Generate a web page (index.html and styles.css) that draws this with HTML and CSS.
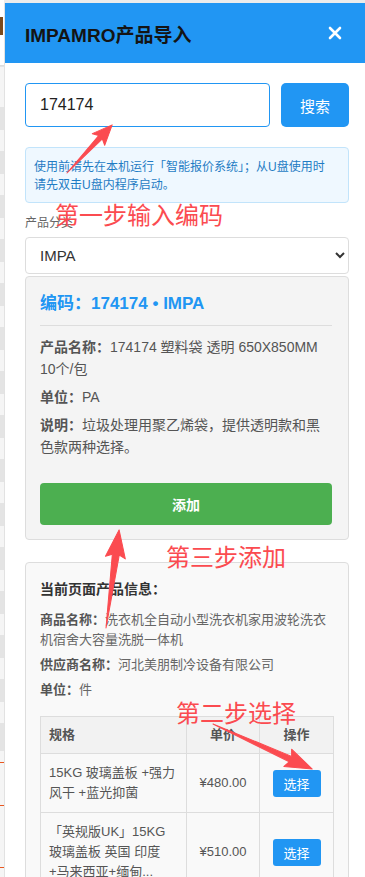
FILE: index.html
```html
<!DOCTYPE html>
<html lang="zh-CN">
  <head>
    <meta charset="UTF-8" />
    <meta name="viewport" content="width=device-width, initial-scale=1.0" />
    <title>IMPAMRO产品导入</title>
    <link rel="stylesheet" href="styles.css">
  </head>
  <body>
    <div class="pageEdge">
      <div class="edgeTop"><span class="edgeMark"></span></div>
      <div class="edgeRows"></div>
      <div class="edgeBottom"></div>
    </div>

    <section class="panel">
      <header class="panelHead">
        <h1>IMPAMRO产品导入</h1>
        <button class="close" aria-label="关闭">
          <svg width="14" height="14" viewBox="0 0 14 14">
            <path d="M2 2 L12 12 M12 2 L2 12" stroke="#fff" stroke-width="2.6" stroke-linecap="round" />
          </svg>
        </button>
      </header>

      <div class="panelBody">
        <div class="searchRow">
          <input type="text" class="codeInput" value="174174" />
          <button class="searchBtn">搜索</button>
        </div>

        <p class="tip">使用前请先在本机运行「智能报价系统」；从U盘使用时请先双击U盘内程序启动。</p>

        <label class="fieldLabel">产品分类</label>
        <select class="category">
          <option>IMPA</option>
        </select>

        <article class="productCard">
          <h3>编码：174174 • IMPA</h3>
          <p><b>产品名称：</b>174174 塑料袋 透明 650X850MM 10个/包</p>
          <p><b>单位：</b>PA</p>
          <p><b>说明：</b>垃圾处理用聚乙烯袋，提供透明款和黑色款两种选择。</p>
          <button class="addBtn">添加</button>
        </article>

        <article class="pageInfo">
          <h4>当前页面产品信息：</h4>
          <p><b>商品名称：</b>洗衣机全自动小型洗衣机家用波轮洗衣机宿舍大容量洗脱一体机</p>
          <p><b>供应商名称：</b>河北美朋制冷设备有限公司</p>
          <p><b>单位：</b>件</p>
          <table class="specs">
            <colgroup>
              <col class="colSpec" />
              <col class="colPrice" />
              <col class="colAction" />
            </colgroup>
            <thead>
              <tr>
                <th class="left">规格</th>
                <th>单价</th>
                <th>操作</th>
              </tr>
            </thead>
            <tbody>
              <tr>
                <td class="left">15KG 玻璃盖板 +强力风干 +蓝光抑菌</td>
                <td>¥480.00</td>
                <td><button class="pickBtn">选择</button></td>
              </tr>
              <tr>
                <td class="left">「英规版UK」15KG 玻璃盖板 英国 印度 +马来西亚+缅甸...</td>
                <td>¥510.00</td>
                <td><button class="pickBtn">选择</button></td>
              </tr>
            </tbody>
          </table>
        </article>
      </div>
    </section>

    <!-- annotations drawn on top of the screenshot -->
    <div class="notes">
      <svg class="arrows" width="365" height="877" viewBox="0 0 365 877">
        <g fill="#fb4b50" stroke="#fb4b50" stroke-width="1" stroke-linejoin="round">
          <path transform="translate(67 173) rotate(-46.8)" d="M0 0 L49 -2.5 L46 -8.5 L66 0 L46 8.5 L49 2.5 Z" />
          <path transform="translate(106 628) rotate(-82.4)" d="M0 0 L74 -3.5 L71 -10 L99 0 L71 10 L74 3.5 Z" />
          <path transform="translate(213 724) rotate(24.4)" d="M0 0 L85 -3 L82 -9.5 L109 0 L82 9.5 L85 3 Z" />
        </g>
      </svg>
      <span class="note noteOne">第一步输入编码</span>
      <span class="note noteThree">第三步添加</span>
      <span class="note noteTwo">第二步选择</span>
    </div>
  </body>
</html>
```

FILE: styles.css
```css
html,
body {
  height: 100%;
  overflow: hidden;
}

body {
  margin: 0;
  position: relative;
  display: flex;
  background: #ececec;
  font-family: "Liberation Sans", "Noto Sans CJK SC", sans-serif;
  color: #555;
}

/* page behind the panel */
.pageEdge {
  width: 4px;
  display: flex;
  flex-direction: column;
  background: #fff;
}
.edgeTop {
  height: 66px;
  border-bottom: 1px solid #ddd;
  padding-top: 17px;
  box-sizing: border-box;
}
.edgeMark {
  display: block;
  width: 3px;
  height: 18px;
  background: #7b4a1c;
}
.edgeRows {
  height: 679px;
  background: repeating-linear-gradient(#f5f5f5 0 21px, #e4e4e4 21px 44px);
  background-position: 0 20px;
}
.edgeBottom {
  flex: 1;
  background: linear-gradient(#e4e4e4 0 6px, #f5f5f5 6px 17px, #e9571f 17px 18px, #f5f5f5 18px 60px, #e9571f 60px 61px, #f5f5f5 61px 122px, #e9571f 122px 123px, #f5f5f5 123px);
}

.panel {
  flex: 1;
  margin-top: 3px;
  background: #fff;
  border-left: 1px solid #e2e2e2;
  min-width: 0;
}

.panelHead {
  height: 60px;
  background: #2196f3;
  display: flex;
  align-items: center;
  justify-content: space-between;
  padding: 0 23px 0 20px;
}
.panelHead h1 {
  margin: 0;
  font-size: 19px;
  font-weight: 700;
  color: #141414;
}
.close {
  border: none;
  background: none;
  padding: 0;
  width: 14px;
  height: 14px;
  display: flex;
}

.panelBody {
  padding: 20px 16px 0 20px;
}

.searchRow {
  display: flex;
  gap: 11px;
}
.codeInput {
  flex: 1;
  min-width: 0;
  height: 44px;
  box-sizing: border-box;
  border: 1px solid #2196f3;
  border-radius: 4px;
  padding: 0 14px;
  font-family: inherit;
  font-size: 16px;
  color: #222;
  outline: none;
}
.searchBtn {
  width: 68px;
  height: 44px;
  border: none;
  border-radius: 5px;
  background: #2196f3;
  color: #fff;
  font-family: inherit;
  font-size: 15px;
}

.tip {
  margin: 20px 0 0;
  padding: 10px 16px 8px 8px;
  background: #eff8ff;
  border: 1px solid #c2e4fb;
  border-radius: 4px;
  font-size: 12px;
  line-height: 18px;
  color: #1f7cc4;
}

.fieldLabel {
  display: block;
  margin-top: 11px;
  font-size: 12px;
  line-height: 18px;
  color: #666;
}
.category {
  display: block;
  width: 100%;
  height: 37px;
  margin-top: 5px;
  padding: 0 10px;
  border: 1px solid #ddd;
  border-radius: 4px;
  background: #fff;
  font-family: inherit;
  font-size: 15px;
  color: #333;
}

.productCard {
  margin-top: 2px;
  padding: 15px 16px 14px 14px;
  background: #f4f4f4;
  border: 1px solid #ddd;
  border-radius: 4px;
}
.productCard h3 {
  margin: 0 0 10px;
  padding-bottom: 9px;
  border-bottom: 1px solid #ddd;
  font-size: 17px;
  line-height: 24px;
  color: #2196f3;
}
.productCard p {
  margin: 0 0 6px;
  font-size: 14px;
  line-height: 22px;
  color: #555;
}
.addBtn {
  display: block;
  width: 100%;
  height: 42px;
  margin-top: 25px;
  border: none;
  border-radius: 4px;
  background: #4caf50;
  color: #fff;
  font-family: inherit;
  font-size: 14px;
  font-weight: 700;
}

.pageInfo {
  margin-top: 22px;
  padding: 16px 14px;
  background: #f9f9f9;
  border: 1px solid #ddd;
  border-radius: 4px;
}
.pageInfo h4 {
  margin: 0 0 11px;
  font-size: 14px;
  line-height: 20px;
  color: #333;
}
.pageInfo p {
  margin: 0 0 5px;
  font-size: 13px;
  line-height: 20px;
  color: #666;
}
.pageInfo p b {
  color: #555;
}

.specs {
  width: 100%;
  margin-top: 16px;
  border-collapse: collapse;
  table-layout: fixed;
  font-size: 13px;
  line-height: 20px;
  color: #555;
}
.colSpec {
  width: 146px;
}
.colPrice {
  width: 73px;
}
.specs th,
.specs td {
  border: 1px solid #ddd;
  text-align: center;
}
.specs th {
  padding: 8px;
  background: #f2f2f2;
  font-weight: 700;
}
.specs td {
  padding: 9px 8px;
}
.specs .left {
  text-align: left;
}
.pickBtn {
  width: 48px;
  height: 27px;
  border: none;
  border-radius: 3px;
  background: #2196f3;
  color: #fff;
  font-family: inherit;
  font-size: 13px;
  vertical-align: middle;
}

/* red step notes over the page */
.notes {
  position: absolute;
  inset: 0;
  pointer-events: none;
}
.arrows {
  position: absolute;
  left: 0;
  top: 0;
}
.note {
  position: absolute;
  font-family: "Noto Sans CJK SC", sans-serif;
  font-size: 24px;
  line-height: 30px;
  color: #fb4b50;
  white-space: nowrap;
}
.noteOne {
  left: 55px;
  top: 199px;
}
.noteThree {
  left: 166px;
  top: 541px;
}
.noteTwo {
  left: 176px;
  top: 697px;
}
```
